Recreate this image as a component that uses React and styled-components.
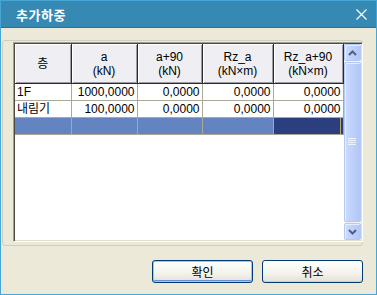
import styled, { createGlobalStyle } from "styled-components";

const Global = createGlobalStyle`
  body {
    margin: 0;
    background: #ece9d8;
    font-family: "Liberation Sans", "Noto Sans CJK KR", sans-serif;
  }
`;

const Window = styled.div`
  width: 377px;
  height: 295px;
  box-sizing: border-box;
  border: 1px solid #46a6d6;
  display: flex;
  flex-direction: column;
  background: #ece9d8;
`;

const TitleBar = styled.div`
  height: 26px;
  background: #3589b2;
  border-bottom: 1px solid #2b6f92;
  display: flex;
  align-items: center;
  justify-content: space-between;
  padding: 0 9px 0 15px;
`;

const Title = styled.div`
  color: #fff;
  font: bold 13px "Noto Sans CJK KR", sans-serif;
  letter-spacing: 0.5px;
`;

const Body = styled.div`
  flex: 1;
  display: flex;
  flex-direction: column;
  padding: 12px 0 0 1px;
`;

const GroupBox = styled.div`
  width: 361px;
  height: 206px;
  box-sizing: border-box;
  border: 1px solid #d0cfbf;
  border-radius: 3px;
  padding: 1px 0 3px 10px;
  display: flex;
`;

const Grid = styled.div`
  flex: 1;
  display: flex;
  border: 1px solid;
  border-color: #a09f97 #fff #fff #a09f97;
  box-shadow: inset 1px 1px 0 #4a4a46, inset -1px -1px 0 #e3e0d0;
  padding: 1px;
  background: #fff;
`;

const TableArea = styled.div`
  flex: 1;
  background: #fff;
`;

const Table = styled.table`
  border-collapse: collapse;
  table-layout: fixed;
  width: 328px;
  font-size: 12px;
  color: #000;
`;

const Head = styled.th`
  height: 39px;
  padding: 0;
  font-weight: normal;
  line-height: 14px;
  text-align: center;
  background: #eeeef3;
  border-right: 1px solid #2a2a2a;
  border-bottom: 1px solid #2a2a2a;
  box-shadow: inset 1px 1px 0 #fff, inset -1px -1px 0 #9c9ca4;
`;

const Cell = styled.td`
  height: 16px;
  padding: 0 2px;
  line-height: 16px;
  text-align: ${(p) => (p.$left ? "left" : "right")};
  border-right: 1px solid #aca899;
  border-bottom: 1px solid #aca899;
  white-space: nowrap;
  overflow: hidden;
  background: ${(p) => (p.$sel ? (p.$focus ? "#2b3f7e" : "#6384c1") : "#fff")};
  box-shadow: ${(p) => (p.$focus ? "inset -2px 0 0 #2b3f7e, inset -3px 0 0 #b8a76a" : "none")};
`;

const ScrollBar = styled.div`
  width: 17px;
  display: flex;
  flex-direction: column;
  gap: 1px;
  background: #f4f3ee;
`;

const ScrollPart = styled.div`
  height: ${(p) => (p.$grow ? "auto" : "15px")};
  flex: ${(p) => (p.$grow ? 1 : "none")};
  border: 1px solid #b4c8f4;
  border-radius: 2px;
  background: linear-gradient(90deg, #cbdafc, #bccefa 60%, #b2c6f6);
  box-shadow: inset 1px 1px 0 #e6eeff;
  display: flex;
  align-items: center;
  justify-content: center;
`;

const Buttons = styled.div`
  display: flex;
  justify-content: flex-end;
  gap: 9px;
  padding: 14px 13px 0 0;
`;

const Button = styled.button`
  width: 101px;
  height: 23px;
  border: 1px solid #003c74;
  border-radius: 3px;
  background: linear-gradient(#ffffff, #f3f2ec 60%, #e3e0d4);
  box-shadow: ${(p) =>
    p.$default ? "inset 0 0 0 1px #a9c3ee, inset 0 -1px 0 1px #6c8edb" : "inset 0 -1px 0 #d6d0c2"};
  font: 12px "Noto Sans CJK KR", sans-serif;
  color: #000;
  padding: 0;
`;

const Chevron = ({ up }) => (
  <svg width="9" height="6" viewBox="0 0 9 6">
    <polyline
      points={up ? "1,5 4.5,1.5 8,5" : "1,1 4.5,4.5 8,1"}
      fill="none"
      stroke="#4d6185"
      strokeWidth="2"
    />
  </svg>
);

const Grip = () => (
  <svg width="8" height="8" viewBox="0 0 8 8">
    {[0.5, 2.5, 4.5, 6.5].map((y) => (
      <line key={y} x1="0" x2="8" y1={y} y2={y} stroke="#eef3ff" strokeWidth="1" />
    ))}
  </svg>
);

const rows = [
  ["1F", "1000,0000", "0,0000", "0,0000", "0,0000"],
  ["내림기", "100,0000", "0,0000", "0,0000", "0,0000"],
];

export default function App() {
  return (
    <Window>
      <Global />
      <TitleBar>
        <Title>추가하중</Title>
        <svg width="11" height="11" viewBox="0 0 11 11">
          <path d="M0.5 0.5 L10.5 10.5 M10.5 0.5 L0.5 10.5" stroke="#fff" strokeWidth="1.2" />
        </svg>
      </TitleBar>
      <Body>
        <GroupBox>
          <Grid>
            <TableArea>
              <Table>
                <colgroup>
                  <col style={{ width: 56 }} />
                  <col style={{ width: 66 }} />
                  <col style={{ width: 65 }} />
                  <col style={{ width: 71 }} />
                  <col style={{ width: 70 }} />
                </colgroup>
                <thead>
                  <tr>
                    <Head>층</Head>
                    <Head>
                      a<br />(kN)
                    </Head>
                    <Head>
                      a+90<br />(kN)
                    </Head>
                    <Head>
                      Rz_a<br />(kN×m)
                    </Head>
                    <Head>
                      Rz_a+90<br />(kN×m)
                    </Head>
                  </tr>
                </thead>
                <tbody>
                  {rows.map((r) => (
                    <tr key={r[0]}>
                      {r.map((v, i) => (
                        <Cell key={i} $left={i === 0}>
                          {v}
                        </Cell>
                      ))}
                    </tr>
                  ))}
                  <tr>
                    {[0, 1, 2, 3, 4].map((i) => (
                      <Cell key={i} $sel $focus={i === 4} />
                    ))}
                  </tr>
                </tbody>
              </Table>
            </TableArea>
            <ScrollBar>
              <ScrollPart>
                <Chevron up />
              </ScrollPart>
              <ScrollPart $grow>
                <Grip />
              </ScrollPart>
              <ScrollPart>
                <Chevron />
              </ScrollPart>
            </ScrollBar>
          </Grid>
        </GroupBox>
        <Buttons>
          <Button $default>확인</Button>
          <Button>취소</Button>
        </Buttons>
      </Body>
    </Window>
  );
}
